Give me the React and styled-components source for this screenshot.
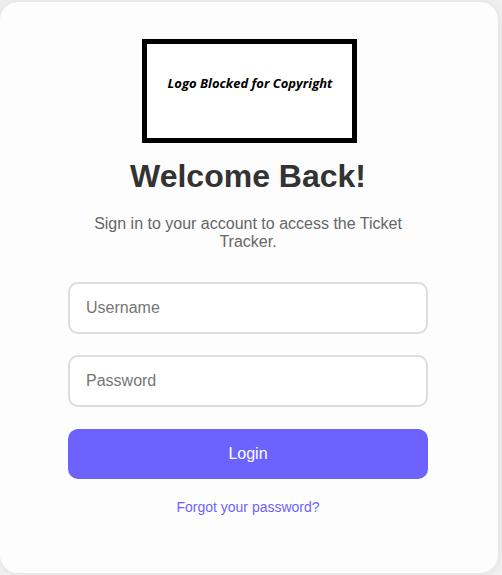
import React from "react";
import styled, { createGlobalStyle } from "styled-components";

const Global = createGlobalStyle`
  html, body { margin: 0; padding: 0; background: #f0f0f0; }
  body { font-family: "Liberation Sans", Arial, sans-serif; }
  * { box-sizing: border-box; }
`;

const Page = styled.div`
  width: 502px;
  height: 575px;
  padding: 2px 4px 2px 0;
  overflow: hidden;
`;

const Card = styled.div`
  height: 571px;
  background: #fdfdfd;
  border-radius: 18px;
  box-shadow: 0 0 10px rgba(0, 0, 0, 0.08);
  display: flex;
  flex-direction: column;
  align-items: center;
  padding: 37px 2px 0 0;
`;

const Logo = styled.div`
  width: 215px;
  height: 104px;
  margin-left: 2px;
  border: 5px solid #000;
  background: #fff;
  display: flex;
  align-items: center;
  justify-content: center;
  padding: 0 0 16px 2px;
  font-family: "Open Sans", sans-serif;
  font-style: italic;
  font-weight: 700;
  font-size: 13px;
  color: #000;
`;

const Title = styled.h1`
  margin: 15px 0 0;
  font-size: 32px;
  font-weight: 700;
  color: #333;
  line-height: 37px;
`;

const Subtitle = styled.p`
  width: 360px;
  margin: 20px 0 0;
  font-size: 16px;
  line-height: 18.4px;
  color: #666;
  text-align: center;
`;

const Form = styled.form`
  width: 360px;
  margin-top: 30px;
  display: flex;
  flex-direction: column;
  gap: 21.5px;
`;

const Input = styled.input`
  width: 100%;
  height: 52px;
  border: 2px solid #ddd;
  border-radius: 10px;
  padding: 0 16px;
  font-family: "Liberation Sans", Arial, sans-serif;
  font-size: 16px;
  background: #fff;
  outline: none;
  &::placeholder { color: #757575; }
`;

const Button = styled.button`
  width: 100%;
  height: 50px;
  border: none;
  border-radius: 10px;
  background: #6c63ff;
  color: #fff;
  font-family: "Liberation Sans", Arial, sans-serif;
  font-size: 16px;
  cursor: pointer;
`;

const Link = styled.a`
  margin-top: 20px;
  font-size: 14px;
  color: #6c63ff;
  text-decoration: none;
  line-height: 16px;
`;

export default function App() {
  return (
    <>
      <Global />
      <Page>
        <Card>
          <Logo>Logo Blocked for Copyright</Logo>
          <Title>Welcome Back!</Title>
          <Subtitle>Sign in to your account to access the Ticket Tracker.</Subtitle>
          <Form onSubmit={(e) => e.preventDefault()}>
            <Input type="text" placeholder="Username" />
            <Input type="password" placeholder="Password" />
            <Button type="submit">Login</Button>
          </Form>
          <Link href="#">Forgot your password?</Link>
        </Card>
      </Page>
    </>
  );
}
